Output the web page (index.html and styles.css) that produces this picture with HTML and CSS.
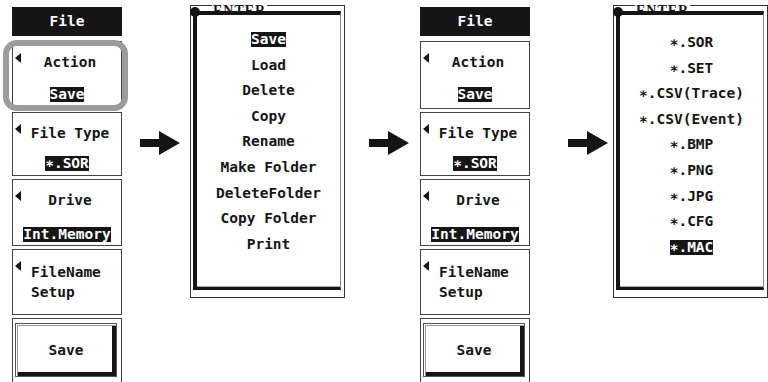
FILE: index.html
```html
<!DOCTYPE html>
<html lang="en">
<head>
  <meta charset="UTF-8" />
  <title>File Save Menu</title>
  <link rel="stylesheet" href="styles.css">
</head>
<body>
  <div class="stage">

    <!-- soft key panel, before -->
    <div class="panel">
      <div class="panel-title">File</div>
      <div class="softkey action">
        <div class="key-label"><span class="tri"></span><span class="label-text">Action</span></div>
        <div class="key-value"><span class="hl">Save</span></div>
      </div>
      <div class="softkey type">
        <div class="key-label"><span class="tri"></span><span class="label-text">File Type</span></div>
        <div class="key-value"><span class="hl">∗.SOR</span></div>
      </div>
      <div class="softkey drive">
        <div class="key-label"><span class="tri"></span><span class="label-text">Drive</span></div>
        <div class="key-value"><span class="hl">Int.Memory</span></div>
      </div>
      <div class="softkey name">
        <div class="key-label"><span class="tri"></span><span class="label-left">FileName<br>Setup</span></div>
      </div>
      <div class="softkey exec">
        <div class="exec-btn">Save</div>
      </div>
      <div class="ring"></div>
    </div>

    <svg class="arrow" width="40" height="24" viewBox="0 0 40 24"><polygon points="0,8 19,8 19,0 40,12 19,24 19,16 0,16" /></svg>

    <!-- action list -->
    <div class="popup">
      <span class="knob"></span>
      <span class="enter">ENTER</span>
      <div class="popup-frame">
        <div class="item"><span class="hl">Save</span></div>
        <div class="item">Load</div>
        <div class="item">Delete</div>
        <div class="item">Copy</div>
        <div class="item">Rename</div>
        <div class="item">Make Folder</div>
        <div class="item">DeleteFolder</div>
        <div class="item">Copy Folder</div>
        <div class="item">Print</div>
      </div>
    </div>

    <svg class="arrow arrow-2" width="40" height="24" viewBox="0 0 40 24"><polygon points="0,8 19,8 19,0 40,12 19,24 19,16 0,16" /></svg>

    <!-- soft key panel, after -->
    <div class="panel panel-2">
      <div class="panel-title">File</div>
      <div class="softkey action">
        <div class="key-label"><span class="tri"></span><span class="label-text">Action</span></div>
        <div class="key-value"><span class="hl">Save</span></div>
      </div>
      <div class="softkey type">
        <div class="key-label"><span class="tri"></span><span class="label-text">File Type</span></div>
        <div class="key-value"><span class="hl">∗.SOR</span></div>
      </div>
      <div class="softkey drive">
        <div class="key-label"><span class="tri"></span><span class="label-text">Drive</span></div>
        <div class="key-value"><span class="hl">Int.Memory</span></div>
      </div>
      <div class="softkey name">
        <div class="key-label"><span class="tri"></span><span class="label-left">FileName<br>Setup</span></div>
      </div>
      <div class="softkey exec">
        <div class="exec-btn">Save</div>
      </div>
    </div>

    <svg class="arrow arrow-3" width="40" height="24" viewBox="0 0 40 24"><polygon points="0,8 19,8 19,0 40,12 19,24 19,16 0,16" /></svg>

    <!-- file type list -->
    <div class="popup popup-2">
      <span class="knob"></span>
      <span class="enter">ENTER</span>
      <div class="popup-frame">
        <div class="item">∗.SOR</div>
        <div class="item">∗.SET</div>
        <div class="item">∗.CSV(Trace)</div>
        <div class="item">∗.CSV(Event)</div>
        <div class="item">∗.BMP</div>
        <div class="item">∗.PNG</div>
        <div class="item">∗.JPG</div>
        <div class="item">∗.CFG</div>
        <div class="item"><span class="hl">∗.MAC</span></div>
      </div>
    </div>

  </div>
</body>
</html>
```

FILE: styles.css
```css
body {
  margin: 0;
  background: #fff;
  color: #151515;
  font-family: "DejaVu Sans Mono", "Liberation Mono", monospace;
  font-weight: bold;
  font-size: 14.5px;
  overflow: hidden;
}

.stage {
  display: flex;
  align-items: flex-start;
  height: 382px;
  padding-left: 12px;
}

/* soft key panel */

.panel {
  position: relative;
  width: 110px;
  flex-shrink: 0;
  display: flex;
  flex-direction: column;
  gap: 3px;
  padding-top: 7px;
}

.panel-2 {
  margin-left: 11px;
}

.panel-title {
  height: 29px;
  line-height: 29px;
  margin-bottom: 2px;
  background: #151515;
  color: #fff;
  text-align: center;
}

.softkey {
  box-sizing: border-box;
  border: 1px solid #444;
  padding: 10px 2px 0;
}

.softkey.action { height: 68px; }
.softkey.type { height: 64px; }
.softkey.drive { height: 67px; }
.softkey.name { height: 66px; }
.softkey.exec {
  height: 70px;
  padding: 4px 4px 0 2px;
}

.key-label {
  display: flex;
  align-items: flex-start;
  line-height: 20px;
}

.tri {
  width: 0;
  height: 0;
  flex-shrink: 0;
  margin-top: 1px;
  border-right: 6px solid #151515;
  border-top: 5px solid transparent;
  border-bottom: 5px solid transparent;
}

.label-text {
  flex: 1;
  text-align: center;
}

.label-left {
  margin-left: 10px;
  margin-top: 2px;
}

.key-value {
  margin-top: 12px;
  line-height: 20px;
  text-align: center;
}

.type .key-value { margin-top: 10px; }
.drive .key-value { margin-top: 14px; }

.hl {
  display: inline-block;
  line-height: 15px;
  background: #151515;
  color: #fff;
}

.exec-btn {
  height: 54px;
  box-sizing: border-box;
  border: 1px solid #555;
  box-shadow: inset 1px 1px 0 #fff, inset 2px 2px 0 #999, inset -4px -4px 0 #151515;
  line-height: 52px;
  text-align: center;
}

/* highlight ring over the Action key */
.ring {
  position: absolute;
  left: -9px;
  top: 40px;
  width: 125px;
  height: 71px;
  box-sizing: border-box;
  border: 6px solid #9c9c9c;
  border-radius: 14px;
}

/* arrows */

.arrow {
  flex-shrink: 0;
  margin-top: 131px;
  margin-left: 18px;
  fill: #151515;
}

.arrow-2 { margin-left: 24px; }
.arrow-3 { margin-left: 38px; }

/* popup lists */

.popup {
  position: relative;
  flex-shrink: 0;
  display: flex;
  width: 155px;
  height: 293px;
  box-sizing: border-box;
  margin-top: 5px;
  margin-left: 10px;
  padding: 5px 3px 7px 2px;
  border: 1px solid #333;
}

.popup-2 {
  margin-left: 5px;
}

.popup-frame {
  flex: 1;
  z-index: 1;
  padding-top: 12px;
  border-top: 4px solid #151515;
  border-left: 4px solid #151515;
  border-right: 1px solid #888;
  border-bottom: 3px solid #151515;
  box-shadow: inset 0 -1px 0 #aaa;
}

.popup-2 .popup-frame {
  padding-top: 15px;
}

.item {
  line-height: 25.6px;
  text-align: center;
}

.knob {
  position: absolute;
  z-index: 2;
  left: -1px;
  top: 1px;
  width: 10px;
  height: 10px;
  border-radius: 50%;
  background: #151515;
}

.enter {
  position: absolute;
  left: 21px;
  top: -2px;
  padding: 0 1px;
  background: #fff;
  font-family: "Liberation Serif", serif;
  font-size: 14px;
  line-height: 14px;
  letter-spacing: 1px;
}
```
